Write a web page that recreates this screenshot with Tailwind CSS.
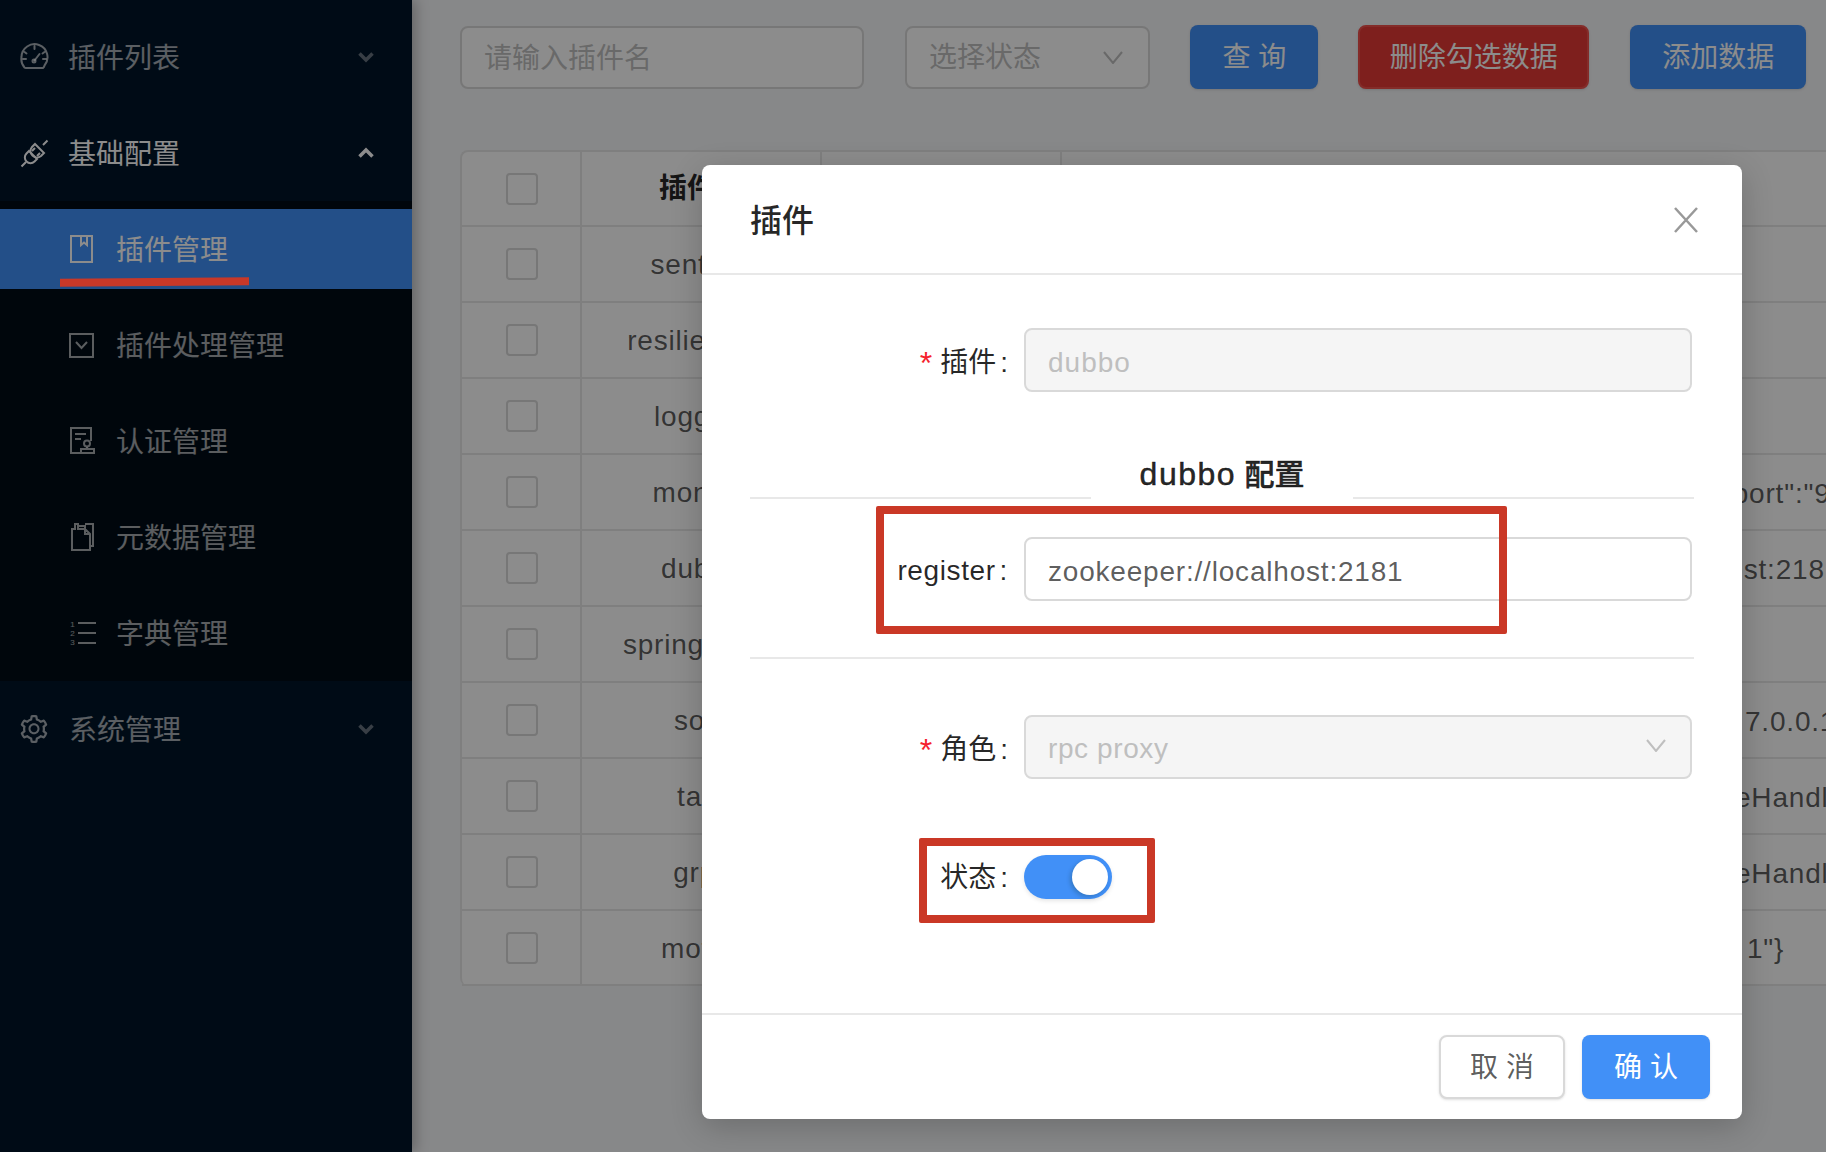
<!DOCTYPE html>
<html lang="zh-CN">
<head>
  <meta charset="UTF-8" />
  <meta name="viewport" content="width=device-width, initial-scale=1.0" />
  <title>插件管理</title>
  <script src="https://cdn.jsdelivr.net/npm/@tailwindcss/browser@4"></script>
</head>
<body class="m-0 font-['Liberation_Sans','Noto_Sans_CJK_SC',sans-serif]">
<div class="relative flex w-[1826px] h-[1152px] overflow-hidden bg-[#f6f7f9]">

  <!-- 侧边栏 -->
  <aside class="relative z-10 w-[412px] shrink-0 pt-[9px] bg-[#001529] text-[28px] text-white/65 shadow-[4px_0_12px_rgba(0,0,0,0.25)]">
    <div class="flex items-center h-[96px] pl-[20px] pr-[38px]">
      <svg class="w-[29px] h-[28px]" viewBox="0 0 29 28" fill="none" stroke="currentColor" stroke-width="2"><path d="M6 25h17a4 4 0 0 0 1.500-2.500A13 13 0 1 0 1.500 14 13 13 0 0 0 4.500 24.500 2 2 0 0 0 6 25z"/><path d="M14.500 17.500l5-6.500M14.500 3v3M4.500 9l2 1.500M24.500 9l-2 1.500M3 16h3M23 16h3" stroke-linecap="round"/><circle cx="14" cy="18" r="1.500"/></svg>
      <span class="ml-[19px] pt-[3px] flex-1">插件列表</span>
      <svg class="w-[16px] h-[12px] text-white/40" viewBox="0 0 16 12" fill="none" stroke="currentColor" stroke-width="3.500"><path d="M1.500 2.500L8 9l6.500-6.500"/></svg>
    </div>
    <div class="flex items-center h-[96px] pl-[20px] pr-[38px] text-white">
      <svg class="w-[29px] h-[29px]" viewBox="0 0 29 29" fill="none" stroke="currentColor" stroke-width="2"><path d="M15 5l9 9-3 3a6.400 6.400 0 0 1-9-9z"/><path d="M23 6l4.500-4.500M1.500 27.500L6 23"/><path d="M9 12l8 8-2.500 2.500a5.500 5.500 0 0 1-8-8z"/><path d="M12 12l3-3M17 17l3-3"/></svg>
      <span class="ml-[19px] pt-[3px] flex-1">基础配置</span>
      <svg class="w-[16px] h-[12px]" viewBox="0 0 16 12" fill="none" stroke="currentColor" stroke-width="3.500"><path d="M1.500 9.500L8 3l6.500 6.500"/></svg>
    </div>

    <div class="bg-[#000c17]">
      <div class="h-[480px] py-[8px] flex flex-col gap-[16px]">
        <div class="flex items-center h-[80px] pl-[70px] bg-[#4190f7] text-white">
          <svg class="w-[23px] h-[28px]" viewBox="0 0 23 28" fill="none" stroke="currentColor" stroke-width="2"><path d="M1 1h21v26H1zM11 1v9l3-2.500 3 2.500V1"/></svg>
          <span class="ml-[23px] pt-[3px]">插件管理</span>
        </div>
        <div class="flex items-center h-[80px] pl-[69px]">
          <svg class="w-[25px] h-[25px]" viewBox="0 0 25 25" fill="none" stroke="currentColor" stroke-width="2"><path d="M1 1h23v23H1zM7 9l5.500 6L18 9"/></svg>
          <span class="ml-[22px] pt-[3px]">插件处理管理</span>
        </div>
        <div class="flex items-center h-[80px] pl-[70px]">
          <svg class="w-[25px] h-[28px]" viewBox="0 0 25 28" fill="none" stroke="currentColor" stroke-width="2"><path d="M10 26H1V1h20v13M5 7h11M5 12h6"/><circle cx="17" cy="16.500" r="3"/><path d="M11 26h13v-4H11zM17 20v2"/></svg>
          <span class="ml-[21px] pt-[3px]">认证管理</span>
        </div>
        <div class="flex items-center h-[80px] pl-[71px]">
          <svg class="w-[23px] h-[28px]" viewBox="0 0 23 28" fill="none" stroke="currentColor" stroke-width="2"><path d="M1 27V6h3V1h3v5h7l5 5v16zM7 3h7v3M14 1h8v22h-3M14 6v5h5"/></svg>
          <span class="ml-[22px] pt-[3px]">元数据管理</span>
        </div>
        <div class="flex items-center h-[80px] pl-[69px]">
          <span class="flex flex-col w-[7px] text-[8px] leading-[9px] text-center">
            <span>1</span><span>2</span><span>3</span>
          </span>
          <span class="flex flex-col gap-[8px] ml-[2px] w-[18px]">
            <span class="block h-[2px] bg-white/65"></span>
            <span class="block h-[2px] bg-white/65"></span>
            <span class="block h-[2px] bg-white/65"></span>
          </span>
          <span class="ml-[20px] pt-[3px]">字典管理</span>
        </div>
      </div>
    </div>

    <div class="flex items-center h-[96px] pl-[18px] pr-[38px]">
      <svg class="w-[32px] h-[32px]" viewBox="0 0 1024 1024" fill="currentColor"><path d="M924.8 625.7l-65.5-56c3.1-19 4.7-38.4 4.7-57.8s-1.6-38.8-4.7-57.8l65.5-56a32.03 32.03 0 0 0 9.3-35.2l-.9-2.6a443.74 443.74 0 0 0-79.7-137.9l-1.8-2.1a32.12 32.12 0 0 0-35.1-9.5l-81.3 28.9c-30-24.6-63.5-44-99.7-57.6l-15.7-85a32.05 32.05 0 0 0-25.8-25.7l-2.7-.5c-52.1-9.4-106.9-9.4-159 0l-2.7.5a32.05 32.05 0 0 0-25.8 25.7l-15.8 85.4a351.86 351.86 0 0 0-99 57.4l-81.9-29.1a32 32 0 0 0-35.1 9.5l-1.8 2.1a446.02 446.02 0 0 0-79.7 137.9l-.9 2.6c-4.5 12.5-.8 26.5 9.3 35.2l66.3 56.6c-3.1 18.8-4.6 38-4.6 57.1 0 19.2 1.5 38.4 4.6 57.1L99 625.5a32.03 32.03 0 0 0-9.3 35.2l.9 2.6c18.1 50.4 44.9 96.9 79.7 137.9l1.8 2.1a32.12 32.12 0 0 0 35.1 9.5l81.9-29.1c29.8 24.5 63.1 43.9 99 57.4l15.8 85.4a32.05 32.05 0 0 0 25.8 25.7l2.7.5a449.4 449.4 0 0 0 159 0l2.7-.5a32.05 32.05 0 0 0 25.8-25.7l15.7-85a350 350 0 0 0 99.7-57.6l81.3 28.9a32 32 0 0 0 35.1-9.5l1.8-2.1c34.8-41.1 61.6-87.5 79.7-137.9l.9-2.6c4.5-12.3.8-26.3-9.3-35zM788.3 465.9c2.5 15.1 3.8 30.6 3.8 46.1s-1.3 31-3.8 46.1l-6.6 40.1 74.7 63.9a370.03 370.03 0 0 1-42.6 73.6L721 702.8l-31.4 25.8c-23.9 19.6-50.5 35-79.3 45.8l-38.1 14.3-17.9 97a377.5 377.5 0 0 1-85 0l-17.9-97.2-37.8-14.5c-28.5-10.8-55-26.2-78.7-45.7l-31.4-25.9-93.4 33.2c-17-22.9-31.2-47.6-42.6-73.6l75.5-64.5-6.5-40c-2.4-14.9-3.7-30.3-3.7-45.5 0-15.3 1.2-30.6 3.7-45.5l6.5-40-75.5-64.5c11.3-26.1 25.6-50.7 42.6-73.6l93.4 33.2 31.4-25.9c23.7-19.5 50.2-34.9 78.7-45.7l37.9-14.3 17.9-97.2c28.1-3.2 56.8-3.2 85 0l17.9 97 38.1 14.3c28.7 10.8 55.4 26.2 79.3 45.8l31.4 25.8 92.8-32.9c17 22.9 31.2 47.6 42.6 73.6L781.8 426l6.5 39.9zM512 326c-97.2 0-176 78.8-176 176s78.8 176 176 176 176-78.8 176-176-78.8-176-176-176zm79.2 255.2A111.6 111.6 0 0 1 512 614c-29.9 0-58-11.7-79.2-32.8A111.6 111.6 0 0 1 400 502c0-29.9 11.7-58 32.8-79.2C454 401.6 482.1 390 512 390c29.9 0 58 11.6 79.2 32.8A111.6 111.6 0 0 1 624 502c0 29.9-11.7 58-32.8 79.2z"/></svg>
      <span class="ml-[19px] pt-[3px] flex-1">系统管理</span>
      <svg class="w-[16px] h-[12px] text-white/40" viewBox="0 0 16 12" fill="none" stroke="currentColor" stroke-width="3.500"><path d="M1.500 2.500L8 9l6.500-6.500"/></svg>
    </div>
  </aside>

  <!-- 主内容 -->
  <main class="flex-1 min-w-0 pl-[48px] pt-[25px] overflow-hidden text-[28px] text-black/65">
    <div class="flex items-center w-[1346px] h-[64px]">
      <input class="w-[404px] h-[63px] pl-[22px] pr-[24px] pt-[4px] bg-white border-2 border-[#d9d9d9] rounded-[8px] placeholder:text-[#bfbfbf]" placeholder="请输入插件名" />
      <div class="flex items-center justify-between w-[246px] h-[63px] ml-[41px] pl-[22px] pr-[25px] bg-white border-2 border-[#d9d9d9] rounded-[8px] text-[#bfbfbf]">
        <span class="pt-[2px]">选择状态</span>
        <svg class="w-[20px] h-[13px]" viewBox="0 0 20 13" fill="none" stroke="currentColor" stroke-width="2"><path d="M1 1l9 11 9-11"/></svg>
      </div>
      <button class="w-[128px] h-[64px] ml-[40px] pt-[2px] rounded-[8px] bg-[#4190f7] text-white shadow-sm">查 询</button>
      <button class="w-[232px] h-[64px] ml-[40px] pt-[2px] rounded-[8px] bg-[#e53935] border-2 border-[#f0504c] text-white shadow-sm">删除勾选数据</button>
      <button class="w-[176px] h-[64px] ml-[41px] pt-[2px] rounded-[8px] bg-[#4190f7] text-white shadow-sm">添加数据</button>
    </div>

    <div class="w-[1500px] mt-[61px] bg-white border-l-2 border-t-2 border-[#e8e8e8] rounded-tl-[8px] rounded-bl-[8px]">
      <div class="grid grid-cols-[120px_240px_240px_1fr] h-[75px] border-b-2 border-[#e8e8e8] font-medium text-black/85">
        <div class="flex items-center justify-center pl-[2px] border-r-2 border-[#e8e8e8]"><span class="w-[32px] h-[32px] border-2 border-[#d9d9d9] rounded-[4px]"></span></div>
        <div class="flex items-center justify-center border-r-2 border-[#e8e8e8] font-bold">插件名</div>
        <div class="border-r-2 border-[#e8e8e8]"></div>
        <div></div>
      </div>
      <div class="grid grid-cols-[120px_240px_240px_1fr] h-[76px] border-b-2 border-[#e8e8e8]">
        <div class="flex items-center justify-center pl-[2px] border-r-2 border-[#e8e8e8]"><span class="w-[32px] h-[32px] border-2 border-[#d9d9d9] rounded-[4px]"></span></div>
        <div class="flex items-center justify-center pt-[2px] tracking-[0.8px]">sentinel</div>
        <div></div><div></div>
      </div>
      <div class="grid grid-cols-[120px_240px_240px_1fr] h-[76px] border-b-2 border-[#e8e8e8]">
        <div class="flex items-center justify-center pl-[2px] border-r-2 border-[#e8e8e8]"><span class="w-[32px] h-[32px] border-2 border-[#d9d9d9] rounded-[4px]"></span></div>
        <div class="flex items-center justify-center pt-[2px] tracking-[0.8px]">resilience4j</div>
        <div></div><div></div>
      </div>
      <div class="grid grid-cols-[120px_240px_240px_1fr] h-[76px] border-b-2 border-[#e8e8e8]">
        <div class="flex items-center justify-center pl-[2px] border-r-2 border-[#e8e8e8]"><span class="w-[32px] h-[32px] border-2 border-[#d9d9d9] rounded-[4px]"></span></div>
        <div class="flex items-center justify-center pt-[2px] tracking-[0.8px]">logging</div>
        <div></div><div></div>
      </div>
      <div class="grid grid-cols-[120px_240px_240px_1fr] h-[76px] border-b-2 border-[#e8e8e8]">
        <div class="flex items-center justify-center pl-[2px] border-r-2 border-[#e8e8e8]"><span class="w-[32px] h-[32px] border-2 border-[#d9d9d9] rounded-[4px]"></span></div>
        <div class="flex items-center justify-center pt-[2px] tracking-[0.8px]">monitor</div>
        <div></div>
        <div class="absolute left-[1722px] mt-[18px] tracking-[0.8px] whitespace-nowrap">"port":"9092"</div>
      </div>
      <div class="grid grid-cols-[120px_240px_240px_1fr] h-[76px] border-b-2 border-[#e8e8e8]">
        <div class="flex items-center justify-center pl-[2px] border-r-2 border-[#e8e8e8]"><span class="w-[32px] h-[32px] border-2 border-[#d9d9d9] rounded-[4px]"></span></div>
        <div class="flex items-center justify-center pt-[2px] tracking-[0.8px]">dubbo</div>
        <div></div>
        <div class="absolute left-[1711px] mt-[18px] tracking-[0.8px] whitespace-nowrap">host:2181</div>
      </div>
      <div class="grid grid-cols-[120px_240px_240px_1fr] h-[76px] border-b-2 border-[#e8e8e8]">
        <div class="flex items-center justify-center pl-[2px] border-r-2 border-[#e8e8e8]"><span class="w-[32px] h-[32px] border-2 border-[#d9d9d9] rounded-[4px]"></span></div>
        <div class="flex items-center justify-center pt-[2px] tracking-[0.8px]">springCloud</div>
        <div></div><div></div>
      </div>
      <div class="grid grid-cols-[120px_240px_240px_1fr] h-[76px] border-b-2 border-[#e8e8e8]">
        <div class="flex items-center justify-center pl-[2px] border-r-2 border-[#e8e8e8]"><span class="w-[32px] h-[32px] border-2 border-[#d9d9d9] rounded-[4px]"></span></div>
        <div class="flex items-center justify-center pt-[2px] tracking-[0.8px]">sofa</div>
        <div></div>
        <div class="absolute left-[1745px] mt-[18px] tracking-[0.8px] whitespace-nowrap">7.0.0.1</div>
      </div>
      <div class="grid grid-cols-[120px_240px_240px_1fr] h-[76px] border-b-2 border-[#e8e8e8]">
        <div class="flex items-center justify-center pl-[2px] border-r-2 border-[#e8e8e8]"><span class="w-[32px] h-[32px] border-2 border-[#d9d9d9] rounded-[4px]"></span></div>
        <div class="flex items-center justify-center pt-[2px] tracking-[0.8px]">tars</div>
        <div></div>
        <div class="absolute left-[1735px] mt-[18px] tracking-[0.8px] whitespace-nowrap">eHandler</div>
      </div>
      <div class="grid grid-cols-[120px_240px_240px_1fr] h-[76px] border-b-2 border-[#e8e8e8]">
        <div class="flex items-center justify-center pl-[2px] border-r-2 border-[#e8e8e8]"><span class="w-[32px] h-[32px] border-2 border-[#d9d9d9] rounded-[4px]"></span></div>
        <div class="flex items-center justify-center pt-[2px] tracking-[0.8px]">grpc</div>
        <div></div>
        <div class="absolute left-[1735px] mt-[18px] tracking-[0.8px] whitespace-nowrap">eHandler</div>
      </div>
      <div class="grid grid-cols-[120px_240px_240px_1fr] h-[75px] border-b-2 border-[#e8e8e8]">
        <div class="flex items-center justify-center pl-[2px] border-r-2 border-[#e8e8e8]"><span class="w-[32px] h-[32px] border-2 border-[#d9d9d9] rounded-[4px]"></span></div>
        <div class="flex items-center justify-center pt-[2px] tracking-[0.8px]">motan</div>
        <div></div>
        <div class="absolute left-[1747px] mt-[17px] tracking-[0.8px] whitespace-nowrap">1"}</div>
      </div>
    </div>
  </main>

  <!-- 遮罩 -->
  <div class="absolute inset-0 z-20 bg-black/45"></div>

  <!-- 弹窗 -->
  <div class="absolute z-30 left-[702px] top-[165px] flex flex-col w-[1040px] h-[954px] bg-white rounded-[8px] text-[28px] text-black/85 shadow-[0_8px_32px_rgba(0,0,0,0.2)]">
    <div class="flex items-center justify-between h-[110px] pl-[48px] pr-[44px] border-b-2 border-[#e8e8e8]">
      <h2 class="pt-[4px] text-[32px] font-medium">插件</h2>
      <svg class="mt-[2px] w-[24px] h-[26px] text-[#999]" viewBox="0 0 24 26" fill="none" stroke="currentColor" stroke-width="2.500"><path d="M1 1l22 24M23 1L1 25"/></svg>
    </div>

    <div class="flex-1 px-[48px]">
      <div class="flex items-center h-[64px] mt-[53px]">
        <label class="flex justify-end items-center w-[274px] pr-[14px] pt-[5px]"><span class="mr-[8px] text-[32px] leading-[32px] text-[#f5222d]">*</span>插件<span class="ml-[4px] mr-[2px]">:</span></label>
        <input class="w-[668px] h-[64px] pl-[22px] pr-[24px] pt-[5px] bg-[#f5f5f5] border-2 border-[#d9d9d9] rounded-[8px] tracking-[1px] text-[#bfbfbf]" value="dubbo" disabled />
      </div>

      <div class="flex items-end h-[45px] mt-[62px]">
        <div class="flex-1 border-b-2 border-[#e8e8e8]"></div>
        <h3 class="w-[262px] text-center text-[30px] leading-[42px] font-medium pb-[3px] [-webkit-text-stroke:0.5px_currentColor]"><span class="text-[32px] tracking-[1.5px]">dubbo</span> 配置</h3>
        <div class="flex-1 border-b-2 border-[#e8e8e8]"></div>
      </div>

      <div class="flex items-center h-[64px] mt-[38px]">
        <label class="flex justify-end items-center w-[274px] pr-[14px] pt-[3px] tracking-[0.6px]">register<span class="ml-[4px] mr-[2px]">:</span></label>
        <input class="w-[668px] h-[64px] pl-[22px] pr-[24px] pt-[5px] bg-white border-2 border-[#d9d9d9] rounded-[8px] tracking-[0.8px] text-black/65" value="zookeeper://localhost:2181" />
      </div>

      <div class="mt-[56px] border-b-2 border-[#e8e8e8]"></div>

      <div class="flex items-center h-[64px] mt-[56px]">
        <label class="flex justify-end items-center w-[274px] pr-[14px] pt-[5px]"><span class="mr-[8px] text-[32px] leading-[32px] text-[#f5222d]">*</span>角色<span class="ml-[4px] mr-[2px]">:</span></label>
        <div class="flex items-center justify-between w-[668px] h-[64px] pl-[22px] pr-[24px] bg-[#f5f5f5] border-2 border-[#d9d9d9] rounded-[8px] text-[#bfbfbf]">
          <span class="tracking-[0.6px] pt-[4px]">rpc proxy</span>
          <svg class="w-[20px] h-[13px] mb-[3px]" viewBox="0 0 20 13" fill="none" stroke="currentColor" stroke-width="2"><path d="M1 1l9 11 9-11"/></svg>
        </div>
      </div>

      <div class="flex items-center h-[44px] mt-[76px]">
        <label class="flex justify-end items-center w-[274px] pr-[14px] pt-[2px]">状态<span class="ml-[4px] mr-[2px]">:</span></label>
        <span class="relative w-[88px] h-[44px] rounded-full bg-[#4190f7] shadow-[0_2px_4px_rgba(0,0,0,0.1)]">
          <span class="absolute right-[4px] top-[4px] w-[36px] h-[36px] rounded-full bg-white shadow-[-2px_2px_4px_rgba(0,35,11,0.2)]"></span>
        </span>
      </div>
    </div>

    <div class="flex items-center justify-end gap-[17px] h-[106px] pr-[32px] border-t-2 border-[#e8e8e8]">
      <button class="w-[126px] h-[64px] pt-[2px] bg-white border-2 border-[#d9d9d9] rounded-[8px] text-black/65 shadow-sm">取 消</button>
      <button class="w-[128px] h-[64px] pt-[2px] bg-[#4190f7] rounded-[8px] text-white shadow-sm">确 认</button>
    </div>
  </div>

  <!-- 红色标注 -->
  <div class="absolute z-40 left-[60px] top-[278px] w-[189px] h-[8px] bg-[#c83828] -rotate-[0.4deg]"></div>
  <div class="absolute z-40 left-[876px] top-[506px] w-[631px] h-[128px] border-[8px] border-[#ca3826] rounded-[2px]"></div>
  <div class="absolute z-40 left-[919px] top-[838px] w-[236px] h-[85px] border-[8px] border-[#ca3826] rounded-[2px]"></div>
</div>
</body>
</html>
